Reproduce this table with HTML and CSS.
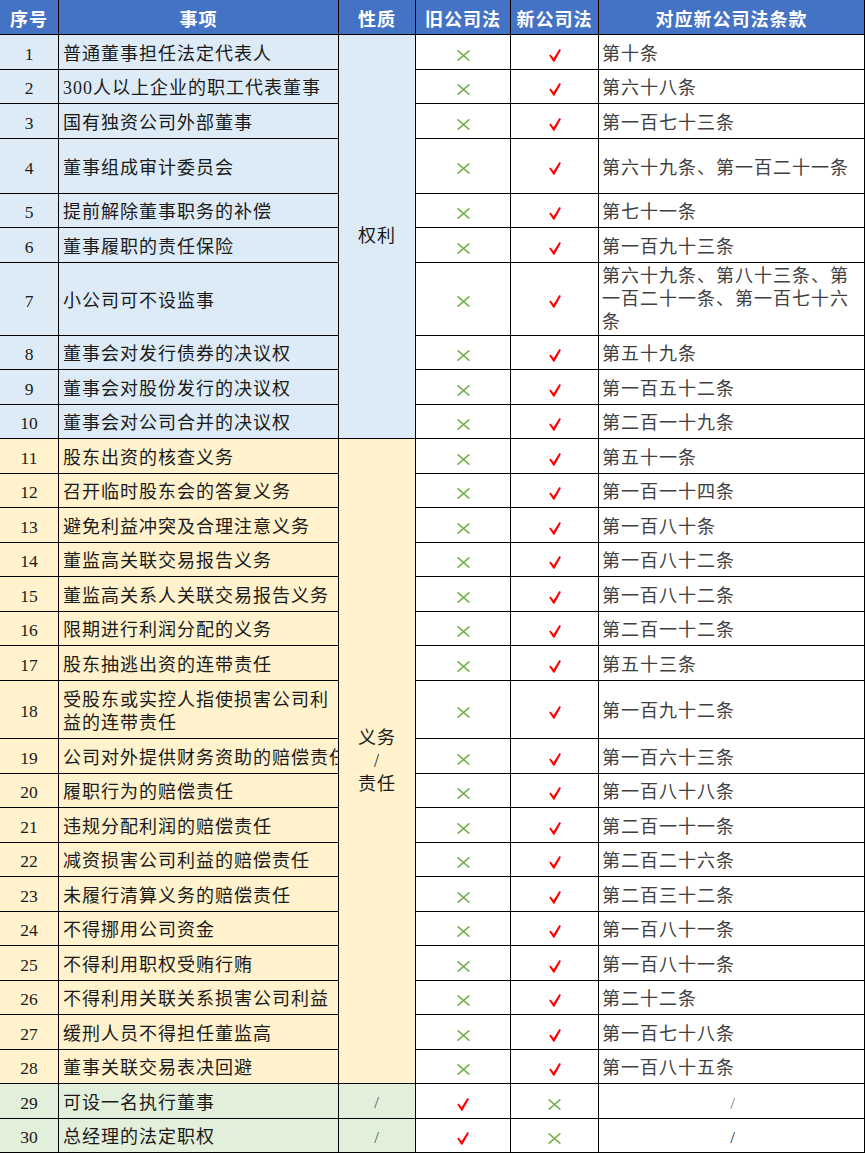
FILE: index.html
```html
<!DOCTYPE html>
<html lang="zh-CN">
<head>
<meta charset="utf-8">
<title>董监高权利义务对照表</title>
<link rel="stylesheet" href="styles.css">
</head>
<body>
<svg width="0" height="0" class="defs" aria-hidden="true">
  <defs>
    <symbol id="no" viewBox="0 0 13 11">
      <path d="M0.6 0.4 L12.4 10.6 M12.4 0.4 L0.6 10.6" stroke="#70AD47" stroke-width="1.5" fill="none"/>
    </symbol>
    <symbol id="yes" viewBox="0 0 12 13">
      <path d="M0.2 6.6 L1.6 5.6 L4.6 9.2 L10.4 0 L12 1 L5.4 12.8 L4.4 12.8 Z" fill="#FF0000"/>
    </symbol>
  </defs>
</svg>
<table class="sheet">
  <colgroup>
    <col class="c1"><col class="c2"><col class="c3"><col class="c4"><col class="c5"><col class="c6">
  </colgroup>
  <thead>
    <tr class="hd">
      <th>序号</th><th>事项</th><th>性质</th><th>旧公司法</th><th>新公司法</th><th>对应新公司法条款</th>
    </tr>
  </thead>
  <tbody>
    <tr class="r blue"><td class="no">1</td><td class="it">普通董事担任法定代表人</td><td class="kind" rowspan="10">权利</td><td class="mk"><svg class="x"><use href="#no"/></svg></td><td class="mk"><svg class="v"><use href="#yes"/></svg></td><td class="art">第十条</td></tr>
    <tr class="r blue"><td class="no">2</td><td class="it">300人以上企业的职工代表董事</td><td class="mk"><svg class="x"><use href="#no"/></svg></td><td class="mk"><svg class="v"><use href="#yes"/></svg></td><td class="art">第六十八条</td></tr>
    <tr class="r blue"><td class="no">3</td><td class="it">国有独资公司外部董事</td><td class="mk"><svg class="x"><use href="#no"/></svg></td><td class="mk"><svg class="v"><use href="#yes"/></svg></td><td class="art">第一百七十三条</td></tr>
    <tr class="r4 blue"><td class="no">4</td><td class="it">董事组成审计委员会</td><td class="mk"><svg class="x"><use href="#no"/></svg></td><td class="mk"><svg class="v"><use href="#yes"/></svg></td><td class="art">第六十九条、第一百二十一条</td></tr>
    <tr class="r blue"><td class="no">5</td><td class="it">提前解除董事职务的补偿</td><td class="mk"><svg class="x"><use href="#no"/></svg></td><td class="mk"><svg class="v"><use href="#yes"/></svg></td><td class="art">第七十一条</td></tr>
    <tr class="r blue"><td class="no">6</td><td class="it">董事履职的责任保险</td><td class="mk"><svg class="x"><use href="#no"/></svg></td><td class="mk"><svg class="v"><use href="#yes"/></svg></td><td class="art">第一百九十三条</td></tr>
    <tr class="r7 blue"><td class="no">7</td><td class="it">小公司可不设监事</td><td class="mk"><svg class="x"><use href="#no"/></svg></td><td class="mk"><svg class="v"><use href="#yes"/></svg></td><td class="art multi">第六十九条、第八十三条、第一百二十一条、第一百七十六条</td></tr>
    <tr class="r blue"><td class="no">8</td><td class="it">董事会对发行债券的决议权</td><td class="mk"><svg class="x"><use href="#no"/></svg></td><td class="mk"><svg class="v"><use href="#yes"/></svg></td><td class="art">第五十九条</td></tr>
    <tr class="r blue"><td class="no">9</td><td class="it">董事会对股份发行的决议权</td><td class="mk"><svg class="x"><use href="#no"/></svg></td><td class="mk"><svg class="v"><use href="#yes"/></svg></td><td class="art">第一百五十二条</td></tr>
    <tr class="r blue"><td class="no">10</td><td class="it">董事会对公司合并的决议权</td><td class="mk"><svg class="x"><use href="#no"/></svg></td><td class="mk"><svg class="v"><use href="#yes"/></svg></td><td class="art">第二百一十九条</td></tr>

    <tr class="r yellow"><td class="no">11</td><td class="it">股东出资的核查义务</td><td class="kind" rowspan="18">义务<br>/<br>责任</td><td class="mk"><svg class="x"><use href="#no"/></svg></td><td class="mk"><svg class="v"><use href="#yes"/></svg></td><td class="art">第五十一条</td></tr>
    <tr class="r yellow"><td class="no">12</td><td class="it">召开临时股东会的答复义务</td><td class="mk"><svg class="x"><use href="#no"/></svg></td><td class="mk"><svg class="v"><use href="#yes"/></svg></td><td class="art">第一百一十四条</td></tr>
    <tr class="r yellow"><td class="no">13</td><td class="it">避免利益冲突及合理注意义务</td><td class="mk"><svg class="x"><use href="#no"/></svg></td><td class="mk"><svg class="v"><use href="#yes"/></svg></td><td class="art">第一百八十条</td></tr>
    <tr class="r yellow"><td class="no">14</td><td class="it">董监高关联交易报告义务</td><td class="mk"><svg class="x"><use href="#no"/></svg></td><td class="mk"><svg class="v"><use href="#yes"/></svg></td><td class="art">第一百八十二条</td></tr>
    <tr class="r yellow"><td class="no">15</td><td class="it">董监高关系人关联交易报告义务</td><td class="mk"><svg class="x"><use href="#no"/></svg></td><td class="mk"><svg class="v"><use href="#yes"/></svg></td><td class="art">第一百八十二条</td></tr>
    <tr class="r yellow"><td class="no">16</td><td class="it">限期进行利润分配的义务</td><td class="mk"><svg class="x"><use href="#no"/></svg></td><td class="mk"><svg class="v"><use href="#yes"/></svg></td><td class="art">第二百一十二条</td></tr>
    <tr class="r yellow"><td class="no">17</td><td class="it">股东抽逃出资的连带责任</td><td class="mk"><svg class="x"><use href="#no"/></svg></td><td class="mk"><svg class="v"><use href="#yes"/></svg></td><td class="art">第五十三条</td></tr>
    <tr class="r18 yellow"><td class="no">18</td><td class="it">受股东或实控人指使损害公司利益的连带责任</td><td class="mk"><svg class="x"><use href="#no"/></svg></td><td class="mk"><svg class="v"><use href="#yes"/></svg></td><td class="art">第一百九十二条</td></tr>
    <tr class="r yellow"><td class="no">19</td><td class="it clip">公司对外提供财务资助的赔偿责任</td><td class="mk"><svg class="x"><use href="#no"/></svg></td><td class="mk"><svg class="v"><use href="#yes"/></svg></td><td class="art">第一百六十三条</td></tr>
    <tr class="r yellow"><td class="no">20</td><td class="it">履职行为的赔偿责任</td><td class="mk"><svg class="x"><use href="#no"/></svg></td><td class="mk"><svg class="v"><use href="#yes"/></svg></td><td class="art">第一百八十八条</td></tr>
    <tr class="r yellow"><td class="no">21</td><td class="it">违规分配利润的赔偿责任</td><td class="mk"><svg class="x"><use href="#no"/></svg></td><td class="mk"><svg class="v"><use href="#yes"/></svg></td><td class="art">第二百一十一条</td></tr>
    <tr class="r yellow"><td class="no">22</td><td class="it">减资损害公司利益的赔偿责任</td><td class="mk"><svg class="x"><use href="#no"/></svg></td><td class="mk"><svg class="v"><use href="#yes"/></svg></td><td class="art">第二百二十六条</td></tr>
    <tr class="r yellow"><td class="no">23</td><td class="it">未履行清算义务的赔偿责任</td><td class="mk"><svg class="x"><use href="#no"/></svg></td><td class="mk"><svg class="v"><use href="#yes"/></svg></td><td class="art">第二百三十二条</td></tr>
    <tr class="r yellow"><td class="no">24</td><td class="it">不得挪用公司资金</td><td class="mk"><svg class="x"><use href="#no"/></svg></td><td class="mk"><svg class="v"><use href="#yes"/></svg></td><td class="art">第一百八十一条</td></tr>
    <tr class="r yellow"><td class="no">25</td><td class="it">不得利用职权受贿行贿</td><td class="mk"><svg class="x"><use href="#no"/></svg></td><td class="mk"><svg class="v"><use href="#yes"/></svg></td><td class="art">第一百八十一条</td></tr>
    <tr class="r yellow"><td class="no">26</td><td class="it">不得利用关联关系损害公司利益</td><td class="mk"><svg class="x"><use href="#no"/></svg></td><td class="mk"><svg class="v"><use href="#yes"/></svg></td><td class="art">第二十二条</td></tr>
    <tr class="r yellow"><td class="no">27</td><td class="it">缓刑人员不得担任董监高</td><td class="mk"><svg class="x"><use href="#no"/></svg></td><td class="mk"><svg class="v"><use href="#yes"/></svg></td><td class="art">第一百七十八条</td></tr>
    <tr class="r yellow"><td class="no">28</td><td class="it">董事关联交易表决回避</td><td class="mk"><svg class="x"><use href="#no"/></svg></td><td class="mk"><svg class="v"><use href="#yes"/></svg></td><td class="art">第一百八十五条</td></tr>

    <tr class="r green"><td class="no">29</td><td class="it">可设一名执行董事</td><td class="kind slash">/</td><td class="mk"><svg class="v"><use href="#yes"/></svg></td><td class="mk"><svg class="x"><use href="#no"/></svg></td><td class="art center slash">/</td></tr>
    <tr class="r green"><td class="no">30</td><td class="it">总经理的法定职权</td><td class="kind slash">/</td><td class="mk"><svg class="v"><use href="#yes"/></svg></td><td class="mk"><svg class="x"><use href="#no"/></svg></td><td class="art center slash dark">/</td></tr>
  </tbody>
</table>
</body>
</html>
```

FILE: styles.css
```css
html, body {
  margin: 0;
  padding: 0;
  background: #ffffff;
}

.defs {
  position: absolute;
  width: 0;
  height: 0;
  overflow: hidden;
}

.sheet {
  border-collapse: collapse;
  table-layout: fixed;
  width: 865px;
  margin: -1px 0 0 -1px;
  font-family: "Liberation Serif", "Noto Sans CJK SC", serif;
  font-size: 18px;
  color: #1a1a1a;
}

.c1 { width: 59px; }
.c2 { width: 280px; }
.c3 { width: 77px; }
.c4 { width: 95px; }
.c5 { width: 88px; }
.c6 { width: 266px; }

.sheet th,
.sheet td {
  border: 1px solid #000000;
  padding: 5px 0 0 0;
  vertical-align: middle;
  line-height: 23px;
  overflow: hidden;
}

.hd {
  height: 35px;
}

.hd th {
  background: #4472C4;
  color: #ffffff;
  font-family: "Noto Sans CJK SC", sans-serif;
  font-weight: 700;
  font-size: 18px;
  letter-spacing: 1px;
  text-align: center;
  padding-top: 3px;
}

.r   { height: 34.5px; }
.r4  { height: 55px; }
.r7  { height: 73px; }
.r18 { height: 58.7px; }

.blue .no, .blue .it { background: #DDEBF7; }
.yellow .no, .yellow .it { background: #FFF2CC; }
.green .no, .green .it, .green .kind { background: #E2EFDA; }
.sheet .kind[rowspan="10"] { background: #DDEBF7; }
.sheet .kind[rowspan="18"] { background: #FFF2CC; }

.no {
  text-align: center;
  font-size: 17.5px;
}

.it {
  text-align: left;
  padding-left: 4px !important;
  letter-spacing: 1px;
}

.it.clip {
  white-space: nowrap;
  text-overflow: clip;
}

.kind {
  text-align: center;
  letter-spacing: 1px;
  line-height: 24px;
  padding-top: 0 !important;
}

.kind.slash {
  padding-top: 4px !important;
  color: #555;
}

.mk {
  text-align: center;
  background: #ffffff;
  padding-top: 4px !important;
}

.mk svg {
  display: inline-block;
  vertical-align: middle;
}

.mk svg.x {
  width: 13px;
  height: 11px;
}

.mk svg.v {
  width: 12px;
  height: 13px;
}

.art {
  text-align: left;
  padding-left: 3px !important;
  letter-spacing: 1px;
  color: #404040;
  background: #ffffff;
}

.art.multi {
  padding-top: 1px !important;
}

.art.center {
  text-align: center;
}

.slash {
  color: #777;
  font-size: 17px;
}

.slash.dark {
  color: #222;
}
```
